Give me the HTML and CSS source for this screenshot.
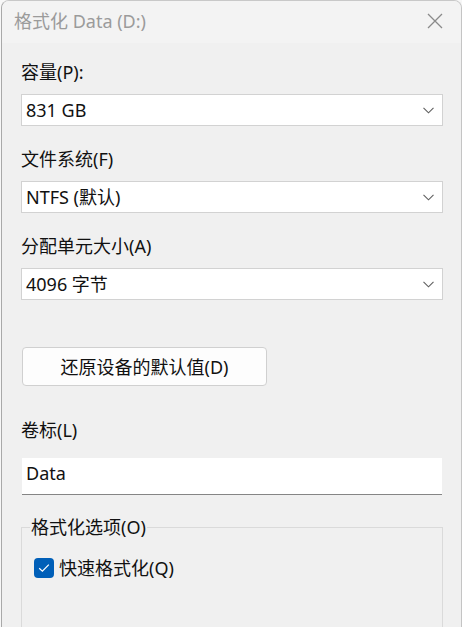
FILE: index.html
```html
<!DOCTYPE html>
<html lang="zh-CN">
<head>
<meta charset="utf-8">
<title>格式化 Data (D:)</title>
<link rel="stylesheet" href="styles.css">
</head>
<body>
<div class="window">
  <div class="titlebar">
    <span class="title">格式化 Data (D:)</span>
    <svg class="close" width="16" height="16" viewBox="0 0 16 16"><path d="M1 1 L15 15 M15 1 L1 15" stroke="#8a8a8a" stroke-width="1.3" fill="none"/></svg>
  </div>
  <div class="content">
    <div class="field">
      <div class="label">容量(P):</div>
      <div class="combo"><span>831 GB</span><svg class="chev" width="11" height="7" viewBox="0 0 11 7"><path d="M0.5 0.8 L5.5 5.8 L10.5 0.8" stroke="#5f5f5f" stroke-width="1.1" fill="none"/></svg></div>
    </div>
    <div class="field">
      <div class="label">文件系统(F)</div>
      <div class="combo"><span>NTFS (默认)</span><svg class="chev" width="11" height="7" viewBox="0 0 11 7"><path d="M0.5 0.8 L5.5 5.8 L10.5 0.8" stroke="#5f5f5f" stroke-width="1.1" fill="none"/></svg></div>
    </div>
    <div class="field">
      <div class="label">分配单元大小(A)</div>
      <div class="combo"><span>4096 字节</span><svg class="chev" width="11" height="7" viewBox="0 0 11 7"><path d="M0.5 0.8 L5.5 5.8 L10.5 0.8" stroke="#5f5f5f" stroke-width="1.1" fill="none"/></svg></div>
    </div>
    <div class="button">还原设备的默认值(D)</div>
    <div class="label label-vol">卷标(L)</div>
    <div class="textbox">Data</div>
    <fieldset class="group">
      <legend>格式化选项(O)</legend>
      <div class="check-row">
        <span class="checkbox"><svg width="12" height="10" viewBox="0 0 12 10"><path d="M1.2 5.2 L4.4 8.2 L10.8 1.6" stroke="#fff" stroke-width="1.2" fill="none"/></svg></span>
        <span>快速格式化(Q)</span>
      </div>
    </fieldset>
  </div>
</div>
</body>
</html>
```
FILE: styles.css
```css
html, body {
  margin: 0;
  padding: 0;
  background: #f7f7f7;
  height: 100%;
  overflow: hidden;
}
body {
  font-family: "Noto Sans", "Noto Sans CJK SC", sans-serif;
  font-size: 18px;
  color: #111;
}
.window {
  margin-left: 1px;
  width: 459px;
  height: 640px;
  border-left: 1px solid #a9a9a9;
  border-top: 1px solid #c8c8c8;
  border-right: 1px solid #c4c4c4;
  border-top-left-radius: 8px;
  border-top-right-radius: 8px;
  background: #f0f0f0;
  overflow: hidden;
}
.titlebar {
  height: 42px;
  background: #f3f3f3;
  display: flex;
  align-items: center;
  justify-content: space-between;
  padding: 0 18px 0 12px;
}
.title {
  color: #9b9b9b;
  line-height: 24px;
  margin-top: -2px;
}
.close {
  display: block;
  margin-top: -2px;
}
.content {
  padding: 17px 18px 0 19px;
}
.field {
  margin-bottom: 21px;
}
.label {
  line-height: 24px;
  height: 24px;
  margin-bottom: 10px;
}
.combo {
  height: 30px;
  background: #fff;
  border: 1px solid #d2d2d2;
  display: flex;
  align-items: center;
  justify-content: space-between;
  padding: 0 8px 0 4px;
  line-height: 24px;
}
.chev {
  display: block;
}
.button {
  margin: 47px 0 0 1px;
  width: 243px;
  height: 37px;
  border: 1px solid #d0d0d0;
  border-radius: 4px;
  background: #fdfdfd;
  display: flex;
  align-items: center;
  justify-content: center;
  line-height: 24px;
}
.label-vol {
  margin-top: 32px;
  margin-bottom: 16px;
}
.textbox {
  margin: 0 1px;
  background: #fff;
  border-bottom: 1px solid #858585;
  padding: 0 4px;
  line-height: 30px;
  box-sizing: border-box;
  height: 37px;
}
.group {
  margin: 20px 0 0 0;
  border: 1px solid #dadada;
  padding: 17px 12px 0 12px;
  height: 140px;
}
.group legend {
  padding: 0 1px;
  margin-left: -4px;
  line-height: 24px;
}
.check-row {
  display: flex;
  align-items: center;
  gap: 5px;
  line-height: 24px;
}
.checkbox {
  width: 20px;
  height: 20px;
  border-radius: 4px;
  background: #005fb8;
  display: flex;
  align-items: center;
  justify-content: center;
}
.checkbox svg {
  display: block;
}
```
